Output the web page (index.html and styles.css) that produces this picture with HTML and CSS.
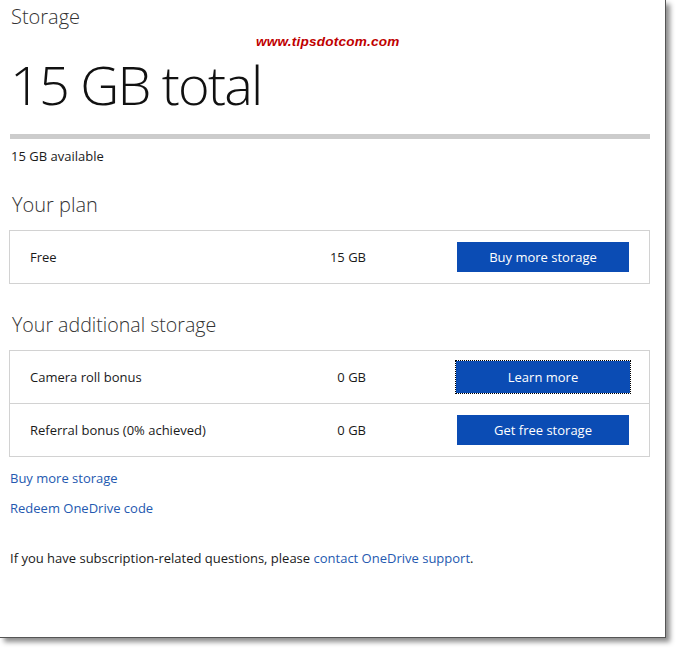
FILE: index.html
```html
<!DOCTYPE html>
<html>
<head>
<meta charset="utf-8">
<link rel="stylesheet" href="styles.css">
</head>
<body>
<div class="panel">
  <div class="title">Storage</div>
  <div class="watermark">www.tipsdotcom.com</div>
  <div class="total">15 GB total</div>
  <div class="bar"></div>
  <div class="avail">15 GB available</div>

  <div class="section-head">Your plan</div>
  <div class="box">
    <div class="row">
      <span class="label">Free</span>
      <span class="size">15 GB</span>
      <span class="spacer"></span>
      <button class="btn">Buy more storage</button>
    </div>
  </div>

  <div class="section-head head-2">Your additional storage</div>
  <div class="box">
    <div class="row">
      <span class="label">Camera roll bonus</span>
      <span class="size">0 GB</span>
      <span class="spacer"></span>
      <button class="btn btn-focus">Learn more</button>
    </div>
    <div class="row row-sep">
      <span class="label">Referral bonus (0% achieved)</span>
      <span class="size">0 GB</span>
      <span class="spacer"></span>
      <button class="btn">Get free storage</button>
    </div>
  </div>

  <div class="links">
    <a class="link" href="#">Buy more storage</a>
    <a class="link" href="#">Redeem OneDrive code</a>
  </div>

  <p class="note">If you have subscription-related questions, please <a class="link-inline" href="#">contact OneDrive support</a>.</p>
</div>
</body>
</html>
```
FILE: styles.css
```css
html, body {
  margin: 0;
  padding: 0;
  background: #ffffff;
}
body {
  font-family: "Open Sans", "Noto Sans", "Liberation Sans", sans-serif;
  color: #1a1a1a;
  width: 680px;
  height: 653px;
  overflow: hidden;
}
.panel {
  position: relative;
  box-sizing: border-box;
  width: 666px;
  height: 638px;
  background: #fff;
  border-right: 1px solid #555;
  border-bottom: 1px solid #555;
  box-shadow: 4px 4px 5px rgba(0,0,0,0.45);
  padding: 0 15px 0 10px;
}
.title {
  font-size: 20px;
  font-weight: 300;
  line-height: 27px;
  padding-top: 3px;
  margin-left: 1px;
  color: #333;
}
.watermark {
  position: absolute;
  left: 256px;
  top: 34px;
  font-family: "Liberation Sans", Arial, sans-serif;
  font-weight: bold;
  font-style: italic;
  font-size: 13.6px;
  color: #c00000;
  letter-spacing: 0.2px;
}
.total {
  font-size: 54px;
  font-weight: 300;
  line-height: 76px;
  margin-top: 16px;
  letter-spacing: -1.8px;
  color: #111;
}
.bar {
  height: 5px;
  background: #cccccc;
  width: 640px;
  margin-top: 12px;
}
.avail {
  font-size: 13px;
  line-height: 18px;
  margin-top: 8px;
  margin-left: 1px;
  color: #1a1a1a;
}
.section-head {
  font-size: 20px;
  font-weight: 300;
  line-height: 27px;
  margin-top: 26px;
  margin-left: 2px;
  color: #333;
}
.head-2 {
  margin-top: 27px;
  font-size: 19.6px;
}
.box {
  box-sizing: border-box;
  width: 641px;
  margin-left: -1px;
  margin-top: 12px;
  border: 1px solid #d2d2d2;
}
.row {
  display: grid;
  grid-template-columns: 236px 100px 91px 172px;
  align-items: center;
  height: 52px;
  padding: 0 20px;
}
.row-sep {
  border-top: 1px solid #d2d2d2;
}
.label, .size {
  font-size: 13px;
  color: #1a1a1a;
}
.size {
  text-align: right;
}
.btn {
  box-sizing: border-box;
  height: 30px;
  width: 172px;
  border: none;
  background: #0b4cb4;
  color: #fff;
  font-family: "Open Sans", "Noto Sans", "Liberation Sans", sans-serif;
  font-size: 13px;
  padding: 0;
  cursor: pointer;
}
.btn-focus {
  outline: 1px dotted #000;
  outline-offset: 0;
  height: 32px;
  width: 174px;
  margin-left: -1px;
}
.links {
  display: flex;
  flex-direction: column;
  gap: 12px;
  margin-top: 12px;
}
.link, .link-inline {
  color: #2459b0;
  text-decoration: none;
}
.link {
  font-size: 13px;
  line-height: 18px;
}
.note {
  font-size: 13px;
  line-height: 18px;
  margin: 32px 0 0 0;
}
```
